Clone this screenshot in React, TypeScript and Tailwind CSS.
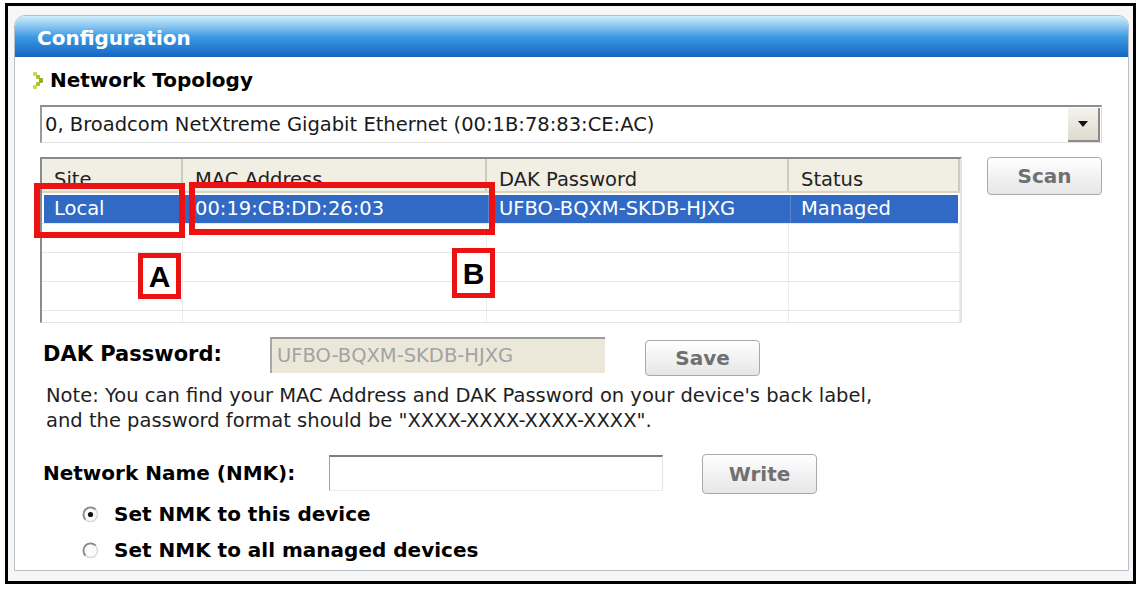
import React from "react";

const cols = [
  { label: "Site", w: "w-[141px]" },
  { label: "MAC Address", w: "w-[304px]" },
  { label: "DAK Password", w: "w-[302px]" },
  { label: "Status", w: "w-[171px]" },
];

const selected = ["Local", "00:19:CB:DD:26:03", "UFBO-BQXM-SKDB-HJXG", "Managed"];

const Arrow = () => (
  <svg width="11" height="17" viewBox="0 0 11 17" className="shrink-0">
    <rect x="0" y="0" width="4" height="4" rx="1" fill="#c9d94a" />
    <rect x="3" y="3" width="4" height="4" rx="1" fill="#a9c22a" />
    <rect x="6" y="6" width="4" height="5" rx="1" fill="#93b21c" />
    <rect x="3" y="10" width="4" height="4" rx="1" fill="#a9c22a" />
    <rect x="0" y="13" width="4" height="4" rx="1" fill="#c9d94a" />
  </svg>
);

const Radio = ({ checked }: { checked?: boolean }) => (
  <svg width="17" height="17" viewBox="0 0 17 17" className="shrink-0">
    <circle cx="8.5" cy="8.5" r="7" fill="#fcfcfc" stroke="#d6d6d6" strokeWidth="1.4" />
    <path d="M3.5 13.5 A7 7 0 0 1 13.5 3.5" fill="none" stroke="#8a8a8a" strokeWidth="1.8" />
    {checked && <circle cx="8.5" cy="8.5" r="2.6" fill="#111" />}
  </svg>
);

const XpButton = ({ label, h }: { label: string; h: string }) => (
  <div
    className={`w-[115px] ${h} shrink-0 flex items-center justify-center rounded-[4px] border border-[#a9a9a9] bg-gradient-to-b from-white to-[#e6e6e6] text-[20px] font-bold text-[#707070]`}
  >
    {label}
  </div>
);

export default function App() {
  return (
    <div className="relative w-[1140px] h-[590px] bg-white pl-[5px] pt-[3px] font-['DejaVu_Sans',sans-serif] text-[#1a1a1a]">
      <div className="w-[1131px] h-[581px] border-[3px] border-black bg-[#f6f6f6] pl-[6px] pt-[9px]">
        {/* window */}
        <div className="w-[1115px] h-[556px] flex flex-col rounded-t-[11px] border border-[#b7c0c9] bg-white">
          <div className="h-[41px] shrink-0 rounded-t-[10px] bg-gradient-to-b from-[#cdeefc] via-[#3c9be2] to-[#1764c2] pl-[22px] pt-[10px] text-[20px] font-bold text-white leading-[24px]">
            Configuration
          </div>

          {/* Network Topology */}
          <div className="mt-[10px] h-[26px] flex items-center gap-[6px] pl-[18px]">
            <Arrow />
            <span className="text-[20px] font-bold text-black">Network Topology</span>
          </div>

          {/* dropdown */}
          <div className="ml-[25px] mt-[12px] w-[1062px] h-[38px] flex items-center border-t-2 border-l-2 border-t-[#8d8d8d] border-l-[#9a9a9a] border-b border-r border-b-[#e2e2e2] border-r-[#dcdcdc] bg-white">
            <span className="flex-1 pl-[3px] text-[19.5px] whitespace-nowrap">
              0, Broadcom NetXtreme Gigabit Ethernet (00:1B:78:83:CE:AC)
            </span>
            <div className="w-[32px] h-[34px] mr-[1px] flex items-center justify-center bg-gradient-to-b from-[#f4f3ee] to-[#dedbcf] border-r-2 border-b-2 border-r-[#8b8b8b] border-b-[#8b8b8b]">
              <svg width="12" height="8" viewBox="0 0 12 8">
                <path d="M1 1 H11 L6 7 Z" fill="#111" />
              </svg>
            </div>
          </div>

          {/* table + scan */}
          <div className="mt-[14px] flex items-start pl-[25px]">
            <div className="w-[922px] h-[166px] flex flex-col border-t-2 border-l-2 border-t-[#8a8a8a] border-l-[#8a8a8a] border-r-2 border-b border-r-[#e4e4e4] border-b-[#e4e4e4] overflow-hidden">
              <div className="h-[34px] shrink-0 flex bg-[#f1efe4] border-b-2 border-b-[#d8d4c4]">
                {cols.map((c) => (
                  <div
                    key={c.label}
                    className={`${c.w} shrink-0 border-r-2 border-r-[#cfcbbb] pl-[12px] pt-[6px] text-[19.5px] text-[#222] whitespace-nowrap`}
                  >
                    {c.label}
                  </div>
                ))}
              </div>
              <div className="h-[2px] shrink-0" />
              <div className="h-[28px] shrink-0 flex bg-[#316ac5] text-white text-[19.5px] mx-[2px]">
                {selected.map((t, i) => (
                  <div
                    key={t}
                    className={`${cols[i].w} shrink-0 flex items-center pl-[10px] whitespace-nowrap ${i < 3 ? "border-r border-r-[#5b86cf]" : ""} ${i === 0 ? "w-[139px]" : ""}`}
                  >
                    {t}
                  </div>
                ))}
              </div>
              {[0, 1, 2, 3].map((r) => (
                <div key={r} className="h-[29px] shrink-0 flex border-t border-t-[#e6e6e6]">
                  {cols.map((c) => (
                    <div key={c.label} className={`${c.w} shrink-0 border-r border-r-[#ededed]`} />
                  ))}
                </div>
              ))}
            </div>
            <div className="ml-[25px]">
              <XpButton label="Scan" h="h-[38px]" />
            </div>
          </div>

          {/* DAK password */}
          <div className="mt-[14px] flex items-start pl-[28px]">
            <div className="w-[227px] h-[36px] flex items-center text-[21px] font-bold text-black">DAK Password:</div>
            <div className="w-[335px] h-[36px] flex items-center bg-[#ebe8da] border-t-2 border-l-2 border-t-[#9a9a9a] border-l-[#a8a8a8] pl-[5px] text-[19.5px] text-[#a3a3a3]">
              UFBO-BQXM-SKDB-HJXG
            </div>
            <div className="ml-[40px] mt-[3px]">
              <XpButton label="Save" h="h-[36px]" />
            </div>
          </div>

          {/* note */}
          <div className="mt-[7px] pl-[31px] text-[19.5px] leading-[25px] text-[#1e1e1e] whitespace-nowrap">
            <div>Note: You can find your MAC Address and DAK Password on your device's back label,</div>
            <div>and the password format should be "XXXX-XXXX-XXXX-XXXX".</div>
          </div>

          {/* NMK */}
          <div className="mt-[21px] flex items-start pl-[28px]">
            <div className="w-[286px] h-[38px] flex items-center text-[20px] font-bold text-black">Network Name (NMK):</div>
            <div className="mt-[1px] w-[334px] h-[36px] bg-white border-t-2 border-l border-t-[#7d7d7d] border-l-[#a0a0a0] border-b border-r border-b-[#ececec] border-r-[#e4e4e4]" />
            <div className="ml-[39px]">
              <XpButton label="Write" h="h-[40px]" />
            </div>
          </div>

          {/* radios */}
          <div className="mt-[5px] h-[30px] flex items-center gap-[15px] pl-[67px]">
            <Radio checked />
            <span className="text-[20px] font-bold text-black">Set NMK to this device</span>
          </div>
          <div className="mt-[6px] h-[30px] flex items-center gap-[15px] pl-[67px]">
            <Radio />
            <span className="text-[20px] font-bold text-black">Set NMK to all managed devices</span>
          </div>
        </div>
      </div>

      {/* annotations */}
      <div className="absolute left-[34px] top-[183px] w-[151px] h-[55px] border-[6px] border-[#ee1111]" />
      <div className="absolute left-[189px] top-[182px] w-[306px] h-[53px] border-[6px] border-[#ee1111]" />
      <div className="absolute left-[138px] top-[253px] w-[43px] h-[46px] border-[5px] border-[#ee1111] bg-white flex items-center justify-center font-['Liberation_Sans',sans-serif] text-[30px] font-bold text-black">
        A
      </div>
      <div className="absolute left-[452px] top-[248px] w-[43px] h-[50px] border-[5px] border-[#ee1111] bg-white flex items-center justify-center font-['Liberation_Sans',sans-serif] text-[30px] font-bold text-black">
        B
      </div>
    </div>
  );
}
